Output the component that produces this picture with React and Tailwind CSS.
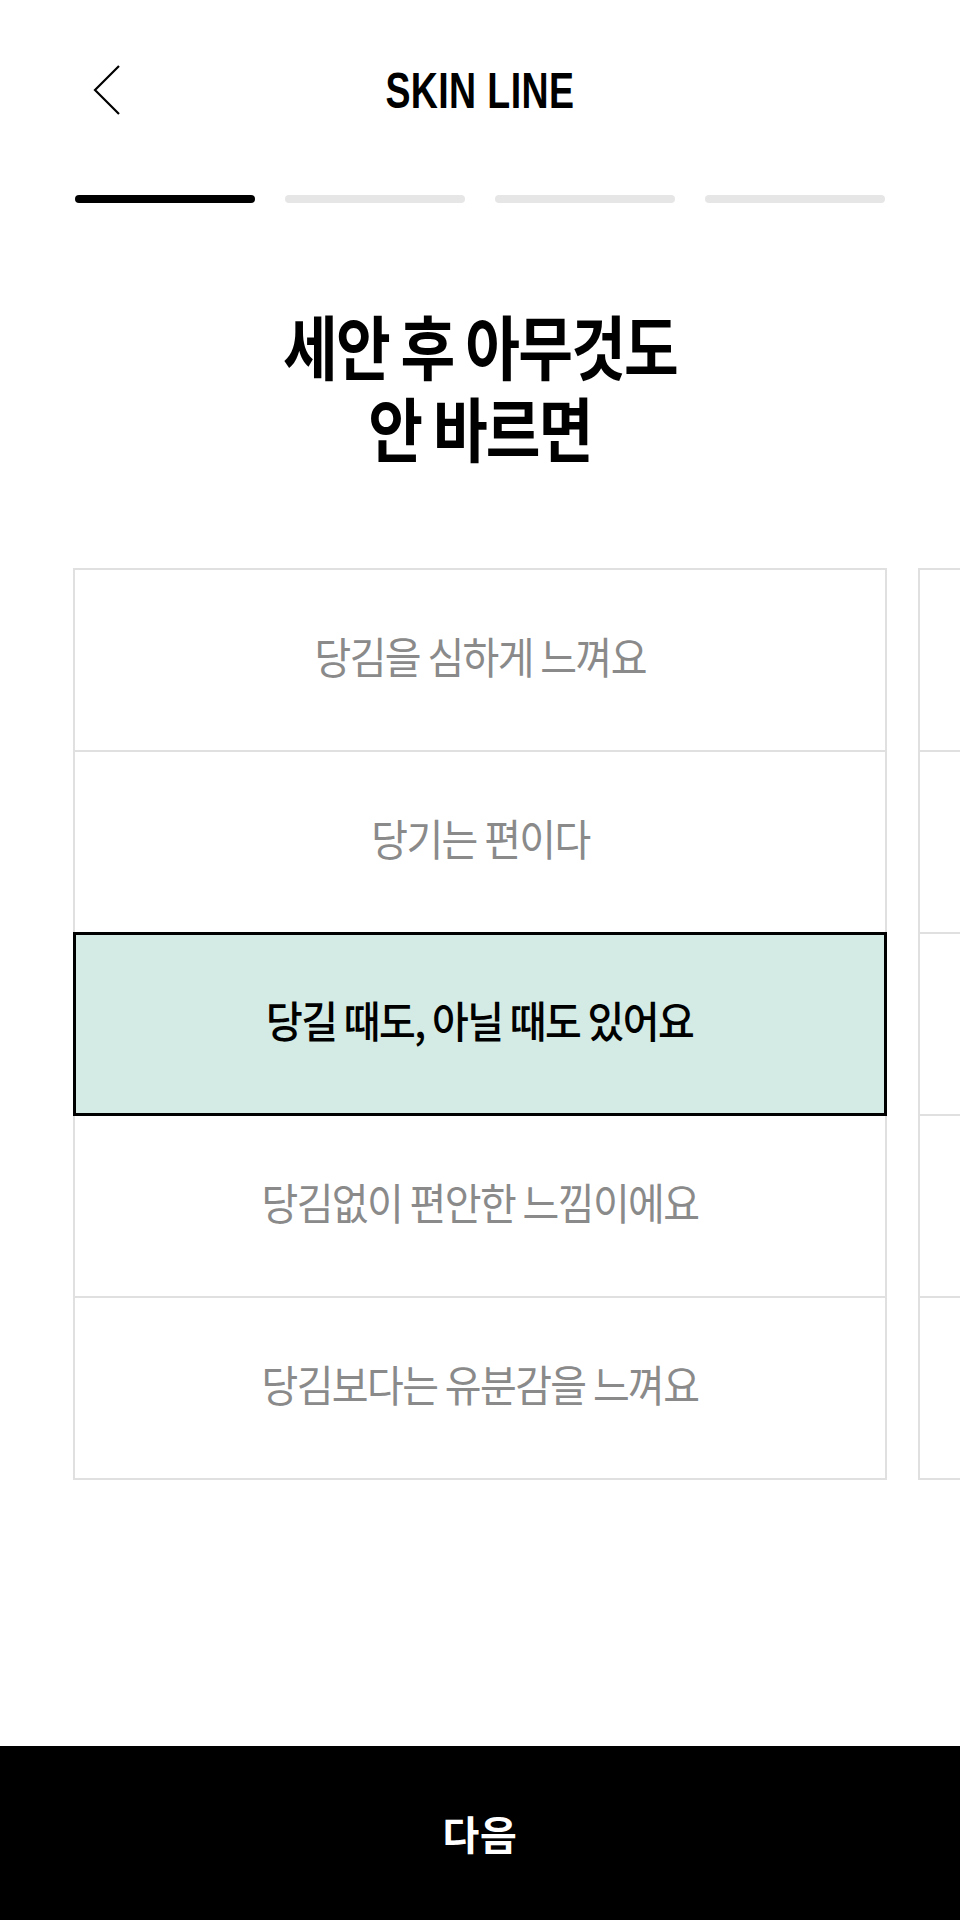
import React from 'react';

const options = ['당김을 심하게 느껴요', '당기는 편이다', '당길 때도, 아닐 때도 있어요', '당김없이 편안한 느낌이에요', '당김보다는 유분감을 느껴요'];

function BackIcon() {
  return (
    <svg width="28" height="52" viewBox="0 0 28 52" fill="none" stroke="#000" strokeWidth="2.2">
      <polyline points="26,2 2,26 26,50" />
    </svg>
  );
}

function OptionColumn({ items, selected }) {
  return (
    <div className="flex w-[814px] shrink-0 flex-col">
      {items.map((label, i) => (
        <div
          key={i}
          className={
            i === selected
              ? 'relative z-10 flex h-[184px] items-center justify-center border-[3px] border-black bg-[#d3ebe4] text-black font-medium ' +
                (i > 0 ? '-mt-[2px]' : '')
              : 'flex h-[184px] items-center justify-center border-2 border-[#e0e0e0] bg-white text-[#8a8a8a] ' + (i > 0 ? '-mt-[2px]' : '')
          }
        >
          <span className="scale-x-[0.93] whitespace-nowrap pb-[10px] text-[43px] leading-none tracking-[-0.04em]">{label}</span>
        </div>
      ))}
    </div>
  );
}

export default function App() {
  const step = 0;

  return (
    <div className="flex h-[1920px] w-[960px] flex-col overflow-hidden bg-white font-['Noto_Sans_CJK_KR',sans-serif]">
      {/* header */}
      <div className="grid h-[180px] grid-cols-[1fr_auto_1fr] items-center px-[93px]">
        <button className="justify-self-start">
          <BackIcon />
        </button>
        <div className="scale-x-[0.75] pt-[2px] font-['Liberation_Sans',Arial,sans-serif] text-[50px] font-bold leading-none tracking-[0.01em] text-black">
          SKIN LINE
        </div>
        <div />
      </div>

      {/* progress */}
      <div className="mt-[15px] grid grid-cols-4 gap-[30px] px-[75px]">
        {[0, 1, 2, 3].map(i => (
          <div key={i} className={i === step ? 'h-2 rounded-full bg-black' : 'h-2 rounded-full bg-[#e6e6e6]'} />
        ))}
      </div>

      {/* question */}
      <h1 className="mt-[101px] scale-x-[0.85] text-center text-[70px] font-bold leading-[82px] tracking-[-0.03em] text-black">
        세안 후 아무것도
        <br />안 바르면
      </h1>

      {/* options carousel */}
      <div className="mt-[100px] flex gap-[31px] overflow-hidden pl-[73px]">
        <OptionColumn items={options} selected={2} />
        <OptionColumn items={['', '', '', '', '']} selected={-1} />
      </div>

      <button className="mt-auto flex h-[174px] w-full items-center justify-center bg-black text-[40px] font-bold tracking-[0.02em] text-white">
        다음
      </button>
    </div>
  );
}
